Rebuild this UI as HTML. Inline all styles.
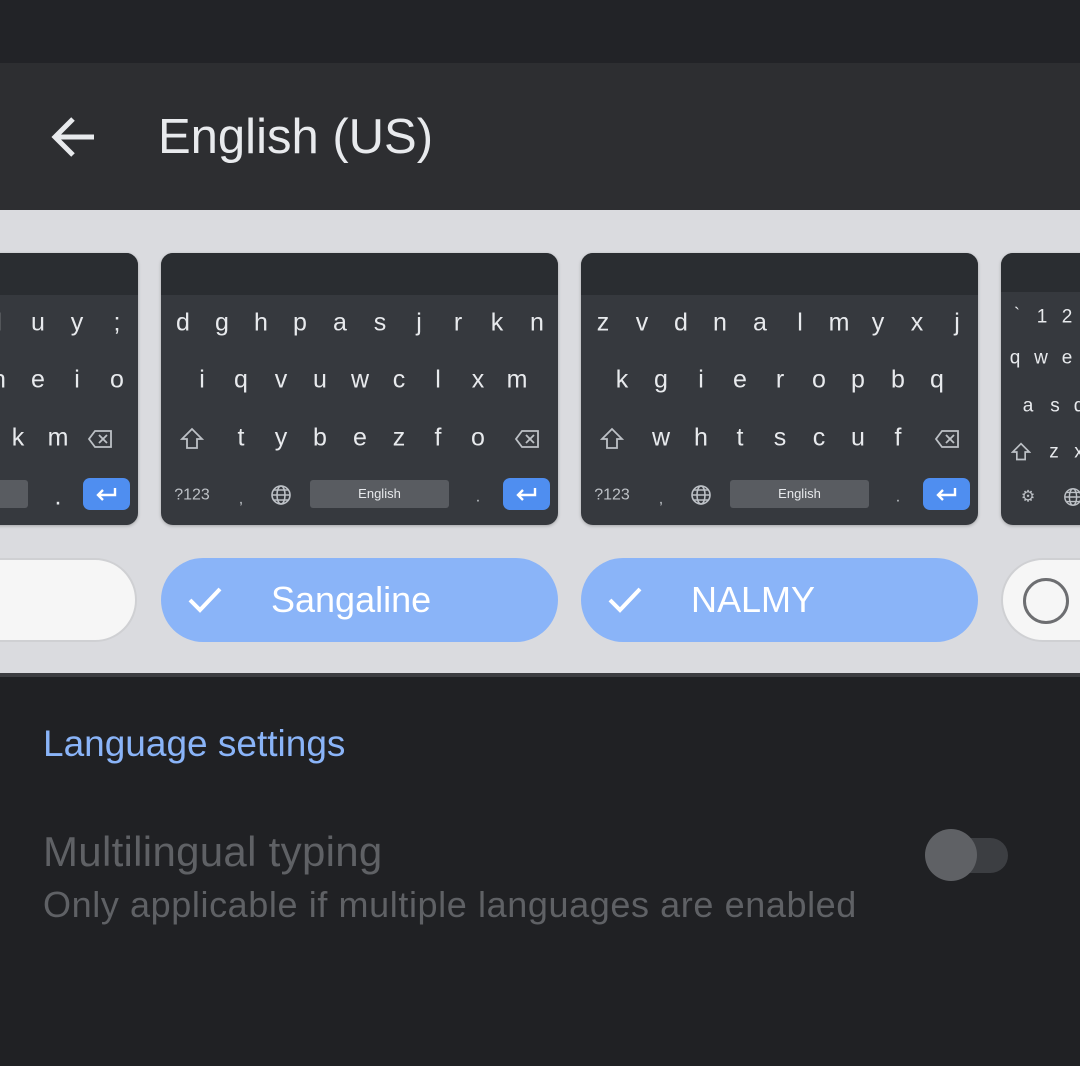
<!DOCTYPE html>
<html><head><meta charset="utf-8"><style>
*{margin:0;padding:0;box-sizing:border-box}
body{width:1080px;height:1066px;overflow:hidden;background:#202124;font-family:"Liberation Sans",sans-serif;position:relative}
.abs{position:absolute}
.status{left:0;top:0;width:1080px;height:63px;background:#222327}
.bar{left:0;top:63px;width:1080px;height:147px;background:#2d2e31}
.title{left:158px;top:107px;font-size:49px;color:#e8eaed;line-height:60px}
.gray{left:0;top:210px;width:1080px;height:463px;background:#dadbdf}
.sep{left:0;top:673px;width:1080px;height:4px;background:#3c3d41}
.card{position:absolute;top:253px;width:397px;height:272px;border-radius:12px;background:#36393e;overflow:hidden;box-shadow:0 1px 3px rgba(0,0,0,.25)}
.card .hd{position:absolute;left:0;top:0;width:100%;height:42px;background:#2a2d31}
.k{position:absolute;transform:translate(-50%,-50%);color:#e8eaed;font-size:25px;line-height:25px}
.s{font-size:16px;color:#bdc1c6}
.sp{position:absolute;top:227px;height:28px;background:#595c61;border-radius:3px;color:#e8eaed;font-size:13px;text-align:center;line-height:28px}
.en{position:absolute;top:225px;width:47px;height:32px;background:#4f8ef0;border-radius:7px}
.pill{position:absolute;top:558px;height:84px;border-radius:42px}
.blue{background:#8ab4f8;width:397px}
.white{background:#f6f6f6;border:2px solid #cfd0d3}
.pt{position:absolute;left:110px;top:20px;font-size:36px;color:#fff;line-height:44px}
</style></head><body>
<div class="abs status"></div>
<div class="abs bar"></div>
<svg class="abs" style="left:48px;top:112px" width="50" height="50" viewBox="0 0 50 50"><path d="M46 25H9M25 7L7 25l18 18" stroke="#e8eaed" stroke-width="5" fill="none"/></svg>
<div class="abs title">English (US)</div>
<div class="abs gray"></div>
<div class="abs sep"></div>

<!-- card 1 -->
<div class="card" style="left:-259px"><div class="hd"></div>
<span class="k" style="left:258px;top:70px">l</span><span class="k" style="left:297px;top:70px">u</span><span class="k" style="left:336px;top:70px">y</span><span class="k" style="left:376px;top:70px">;</span>
<span class="k" style="left:258px;top:127px">h</span><span class="k" style="left:297px;top:127px">e</span><span class="k" style="left:336px;top:127px">i</span><span class="k" style="left:376px;top:127px">o</span>
<span class="k" style="left:277px;top:185px">k</span><span class="k" style="left:317px;top:185px">m</span>
<svg class="k" style="left:359px;top:186px" width="26" height="20" viewBox="0 0 26 20"><path d="M8 2h16v16H8L2 10z M12 6l8 8M20 6l-8 8" stroke="#bdc1c6" stroke-width="1.8" fill="none"/></svg>
<div class="sp" style="left:150px;width:137px"></div>
<span class="k" style="left:317px;top:244px">.</span>
<div class="en" style="left:342px"><svg width="47" height="32" viewBox="0 0 47 32"><path d="M32 10v7H15M20 12l-5 5 5 5" stroke="#fff" stroke-width="2.4" fill="none"/></svg></div>
</div>

<!-- card 2 -->
<div class="card" style="left:161px"><div class="hd"></div>
<span class="k" style="left:22px;top:70px">d</span><span class="k" style="left:61px;top:70px">g</span><span class="k" style="left:100px;top:70px">h</span><span class="k" style="left:139px;top:70px">p</span><span class="k" style="left:179px;top:70px">a</span><span class="k" style="left:219px;top:70px">s</span><span class="k" style="left:258px;top:70px">j</span><span class="k" style="left:297px;top:70px">r</span><span class="k" style="left:336px;top:70px">k</span><span class="k" style="left:376px;top:70px">n</span>
<span class="k" style="left:41px;top:127px">i</span><span class="k" style="left:80px;top:127px">q</span><span class="k" style="left:120px;top:127px">v</span><span class="k" style="left:159px;top:127px">u</span><span class="k" style="left:199px;top:127px">w</span><span class="k" style="left:238px;top:127px">c</span><span class="k" style="left:277px;top:127px">l</span><span class="k" style="left:317px;top:127px">x</span><span class="k" style="left:356px;top:127px">m</span>
<svg class="k" style="left:31px;top:186px" width="24" height="24" viewBox="0 0 24 24"><path d="M12 2L2 12h5v9h10v-9h5z" stroke="#bdc1c6" stroke-width="1.8" fill="none"/></svg>
<span class="k" style="left:80px;top:185px">t</span><span class="k" style="left:120px;top:185px">y</span><span class="k" style="left:159px;top:185px">b</span><span class="k" style="left:199px;top:185px">e</span><span class="k" style="left:238px;top:185px">z</span><span class="k" style="left:277px;top:185px">f</span><span class="k" style="left:317px;top:185px">o</span>
<svg class="k" style="left:366px;top:186px" width="26" height="20" viewBox="0 0 26 20"><path d="M8 2h16v16H8L2 10z M12 6l8 8M20 6l-8 8" stroke="#bdc1c6" stroke-width="1.8" fill="none"/></svg>
<span class="k s" style="left:31px;top:242px">?123</span><span class="k s" style="left:80px;top:246px">,</span>
<svg class="k" style="left:120px;top:242px" width="22" height="22" viewBox="0 0 22 22"><g stroke="#bdc1c6" stroke-width="1.6" fill="none"><circle cx="11" cy="11" r="9"/><ellipse cx="11" cy="11" rx="4" ry="9"/><path d="M2 11h18M4 6h14M4 16h14"/></g></svg>
<div class="sp" style="left:149px;width:139px">English</div>
<span class="k s" style="left:317px;top:244px">.</span>
<div class="en" style="left:342px"><svg width="47" height="32" viewBox="0 0 47 32"><path d="M32 10v7H15M20 12l-5 5 5 5" stroke="#fff" stroke-width="2.4" fill="none"/></svg></div>
</div>

<!-- card 3 -->
<div class="card" style="left:581px"><div class="hd"></div>
<span class="k" style="left:22px;top:70px">z</span><span class="k" style="left:61px;top:70px">v</span><span class="k" style="left:100px;top:70px">d</span><span class="k" style="left:139px;top:70px">n</span><span class="k" style="left:179px;top:70px">a</span><span class="k" style="left:219px;top:70px">l</span><span class="k" style="left:258px;top:70px">m</span><span class="k" style="left:297px;top:70px">y</span><span class="k" style="left:336px;top:70px">x</span><span class="k" style="left:376px;top:70px">j</span>
<span class="k" style="left:41px;top:127px">k</span><span class="k" style="left:80px;top:127px">g</span><span class="k" style="left:120px;top:127px">i</span><span class="k" style="left:159px;top:127px">e</span><span class="k" style="left:199px;top:127px">r</span><span class="k" style="left:238px;top:127px">o</span><span class="k" style="left:277px;top:127px">p</span><span class="k" style="left:317px;top:127px">b</span><span class="k" style="left:356px;top:127px">q</span>
<svg class="k" style="left:31px;top:186px" width="24" height="24" viewBox="0 0 24 24"><path d="M12 2L2 12h5v9h10v-9h5z" stroke="#bdc1c6" stroke-width="1.8" fill="none"/></svg>
<span class="k" style="left:80px;top:185px">w</span><span class="k" style="left:120px;top:185px">h</span><span class="k" style="left:159px;top:185px">t</span><span class="k" style="left:199px;top:185px">s</span><span class="k" style="left:238px;top:185px">c</span><span class="k" style="left:277px;top:185px">u</span><span class="k" style="left:317px;top:185px">f</span>
<svg class="k" style="left:366px;top:186px" width="26" height="20" viewBox="0 0 26 20"><path d="M8 2h16v16H8L2 10z M12 6l8 8M20 6l-8 8" stroke="#bdc1c6" stroke-width="1.8" fill="none"/></svg>
<span class="k s" style="left:31px;top:242px">?123</span><span class="k s" style="left:80px;top:246px">,</span>
<svg class="k" style="left:120px;top:242px" width="22" height="22" viewBox="0 0 22 22"><g stroke="#bdc1c6" stroke-width="1.6" fill="none"><circle cx="11" cy="11" r="9"/><ellipse cx="11" cy="11" rx="4" ry="9"/><path d="M2 11h18M4 6h14M4 16h14"/></g></svg>
<div class="sp" style="left:149px;width:139px">English</div>
<span class="k s" style="left:317px;top:244px">.</span>
<div class="en" style="left:342px"><svg width="47" height="32" viewBox="0 0 47 32"><path d="M32 10v7H15M20 12l-5 5 5 5" stroke="#fff" stroke-width="2.4" fill="none"/></svg></div>
</div>

<!-- card 4 -->
<div class="card" style="left:1001px"><div class="hd" style="height:39px"></div>
<span class="k" style="left:16px;top:62px;font-size:18px">`</span><span class="k" style="left:41px;top:64px;font-size:19px">1</span><span class="k" style="left:66px;top:64px;font-size:19px">2</span>
<span class="k" style="left:14px;top:105px;font-size:19px">q</span><span class="k" style="left:40px;top:105px;font-size:19px">w</span><span class="k" style="left:66px;top:105px;font-size:19px">e</span>
<span class="k" style="left:27px;top:153px;font-size:19px">a</span><span class="k" style="left:54px;top:153px;font-size:19px">s</span><span class="k" style="left:78px;top:153px;font-size:19px">d</span>
<svg class="k" style="left:20px;top:199px" width="20" height="20" viewBox="0 0 24 24"><path d="M12 2L2 12h5v9h10v-9h5z" stroke="#bdc1c6" stroke-width="2" fill="none"/></svg>
<span class="k" style="left:53px;top:199px;font-size:19px">z</span><span class="k" style="left:78px;top:199px;font-size:19px">x</span>
<span class="k s" style="left:27px;top:244px;font-size:16px">⚙</span>
<svg class="k" style="left:72px;top:244px" width="20" height="20" viewBox="0 0 22 22"><g stroke="#bdc1c6" stroke-width="1.6" fill="none"><circle cx="11" cy="11" r="9"/><ellipse cx="11" cy="11" rx="4" ry="9"/><path d="M2 11h18M4 6h14M4 16h14"/></g></svg>
</div>

<!-- pills -->
<div class="pill white" style="left:-260px;width:397px"></div>
<div class="pill blue" style="left:161px">
<svg class="abs" style="left:26px;top:26px" width="36" height="32" viewBox="0 0 36 32"><path d="M3 16l10 10L33 5" stroke="#fff" stroke-width="4" fill="none"/></svg>
<div class="pt">Sangaline</div></div>
<div class="pill blue" style="left:581px">
<svg class="abs" style="left:26px;top:26px" width="36" height="32" viewBox="0 0 36 32"><path d="M3 16l10 10L33 5" stroke="#fff" stroke-width="4" fill="none"/></svg>
<div class="pt">NALMY</div></div>
<div class="pill white" style="left:1001px;width:397px"><div class="abs" style="left:20px;top:18px;width:46px;height:46px;border:3px solid #6d6e71;border-radius:50%"></div></div>

<div class="abs" style="left:43px;top:723px;font-size:37px;color:#8ab4f8;line-height:42px">Language settings</div>
<div class="abs" style="left:43px;top:828px;font-size:42px;color:#5f6165;line-height:48px;letter-spacing:0.3px">Multilingual typing</div>
<div class="abs" style="left:43px;top:884px;font-size:36px;color:#5f6165;line-height:42px;letter-spacing:0.6px">Only applicable if multiple languages are enabled</div>
<div class="abs" style="left:930px;top:838px;width:78px;height:35px;border-radius:18px;background:#3c3e42"></div>
<div class="abs" style="left:925px;top:829px;width:52px;height:52px;border-radius:50%;background:#5f6165"></div>
</body></html>
